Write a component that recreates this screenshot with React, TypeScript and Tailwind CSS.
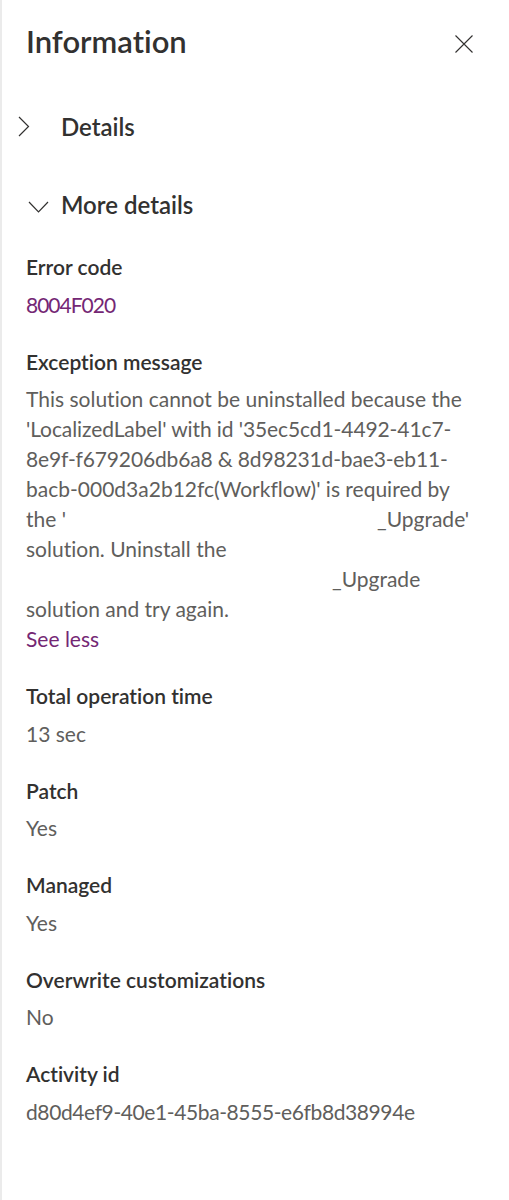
const fields = [
  { label: 'Total operation time', value: '13 sec', tight: false },
  { label: 'Patch', value: 'Yes', tight: false },
  { label: 'Managed', value: 'Yes', tight: false },
  { label: 'Overwrite customizations', value: 'No', tight: false },
  { label: 'Activity id', value: 'd80d4ef9-40e1-45ba-8555-e6fb8d38994e', tight: true },
];

function ChevronRight() {
  return (
    <svg width="12" height="22" viewBox="0 0 12 22" fill="none">
      <polyline points="1,1 10.5,10.5 1,20" stroke="#323130" strokeWidth="1.2" />
    </svg>
  );
}

function ChevronDown() {
  return (
    <svg width="21" height="13" viewBox="0 0 21 13" fill="none">
      <polyline points="1,1 10.5,11 20,1" stroke="#323130" strokeWidth="1.2" />
    </svg>
  );
}

function Field({ label, children }: { label: string; children: React.ReactNode }) {
  return (
    <div>
      <div className="font-semibold text-[21px] leading-[30px] text-[#323130] mb-[7.5px]">{label}</div>
      {children}
    </div>
  );
}

export default function App() {
  return (
    <div className="w-[509px] h-[1200px] bg-white border-l-2 border-[#ebebeb] font-[family-name:Lato,sans-serif] [font-variant-ligatures:none] text-[#323130]">
      {/* header */}
      <div className="flex justify-between items-start pl-[24px] pr-[36px] pt-[23px]">
        <h1 className="font-semibold text-[31px] leading-[36px]">Information</h1>
        <button className="mt-[12px] w-[18px] h-[18px]">
          <svg width="18" height="18" viewBox="0 0 18 18" fill="none">
            <path d="M0.5 0.5 L17.5 17.5 M17.5 0.5 L0.5 17.5" stroke="#323130" strokeWidth="1.1" />
          </svg>
        </button>
      </div>

      {/* accordions */}
      <div className="mt-[52px] pl-[16px]">
        <button className="flex items-center h-[32px]">
          <span className="w-[43px] flex items-center">
            <ChevronRight />
          </span>
          <span className="font-semibold text-[24px] leading-[32px]">Details</span>
        </button>
        <button className="flex items-center h-[32px] mt-[46px]">
          <span className="w-[43px] flex items-center pl-[10px] pt-[4px]">
            <ChevronDown />
          </span>
          <span className="font-semibold text-[24px] leading-[32px]">More details</span>
        </button>
      </div>

      {/* details body */}
      <div className="pl-[24px] mt-[31px] flex flex-col gap-[27px]">
        <Field label="Error code">
          <div className="text-[21px] leading-[30px] text-[#742774] tracking-[-1px]">8004F020</div>
        </Field>
        <Field label="Exception message">
          <div className="text-[21px] leading-[30px] text-[#605e5c] whitespace-nowrap">
            <div>This solution cannot be uninstalled because the</div>
            <div className="tracking-[-0.1px]">'LocalizedLabel' with id '35ec5cd1-4492-41c7-</div>
            <div className="tracking-[-0.15px]">8e9f-f679206db6a8 &amp; 8d98231d-bae3-eb11-</div>
            <div>bacb-000d3a2b12fc(Workflow)' is required by</div>
            <div>
              <span className="inline-block w-[351px]">the '</span>_Upgrade'
            </div>
            <div>solution. Uninstall the</div>
            <div className="pl-[306px]">_Upgrade</div>
            <div>solution and try again.</div>
            <a className="block text-[#742774]">See less</a>
          </div>
        </Field>
        {fields.map((f) => (
          <Field key={f.label} label={f.label}>
            <div className={f.tight ? 'text-[21px] leading-[30px] text-[#605e5c] tracking-[-0.4px]' : 'text-[21px] leading-[30px] text-[#605e5c]'}>
              {f.value}
            </div>
          </Field>
        ))}
      </div>
    </div>
  );
}
